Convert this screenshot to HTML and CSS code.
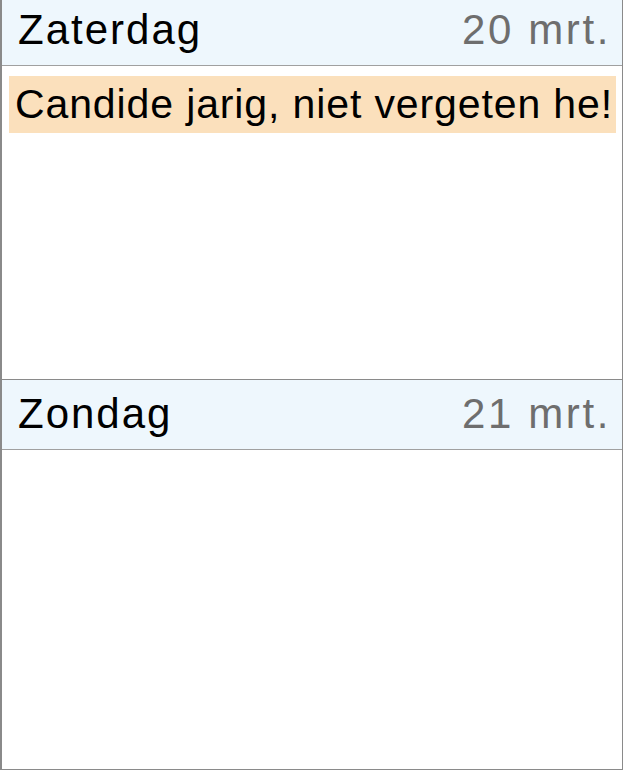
FILE: index.html
```html
<!DOCTYPE html>
<html lang="nl">
<head>
<meta charset="utf-8">
<title>Week</title>
<link rel="stylesheet" href="styles.css">
</head>
<body>
<div class="week">
  <section class="day day-first">
    <header class="day-header">
      <span class="day-name">Zaterdag</span>
      <span class="day-date">20 mrt.</span>
    </header>
    <div class="day-body">
      <div class="event">Candide jarig, niet vergeten he!</div>
    </div>
  </section>
  <section class="day day-second">
    <header class="day-header">
      <span class="day-name">Zondag</span>
      <span class="day-date">21 mrt.</span>
    </header>
    <div class="day-body"></div>
  </section>
</div>
</body>
</html>
```
FILE: styles.css
```css
html, body {
  margin: 0;
  padding: 0;
  background: #ffffff;
}
body {
  font-family: "Liberation Sans", Arial, sans-serif;
  color: #000;
  overflow: hidden;
}
.week {
  width: 623px;
  box-sizing: border-box;
  margin-top: -5px;
  border: 1px solid #8a8a8a;
  border-left-width: 2px;
}
.day {
  display: flex;
  flex-direction: column;
}
.day-second {
  border-top: 1px solid #8a8a8a;
}
.day-header {
  height: 70px;
  box-sizing: border-box;
  background: #eef7fd;
  border-bottom: 1px solid #a0a0a0;
  display: flex;
  align-items: center;
  justify-content: space-between;
  padding: 0 11px 2px 16px;
  font-size: 42px;
  letter-spacing: 2px;
}
.day-date {
  color: #6e6e6e;
  letter-spacing: 2.6px;
}
.day-first .day-body {
  height: 313px;
  padding: 10px 6px 0 7px;
  box-sizing: border-box;
}
.day-second .day-body {
  height: 319px;
}
.event {
  background: #fbe0bc;
  height: 57px;
  line-height: 57px;
  padding-left: 6px;
  font-size: 41px;
  letter-spacing: 0.88px;
  white-space: nowrap;
  overflow: hidden;
}
```
